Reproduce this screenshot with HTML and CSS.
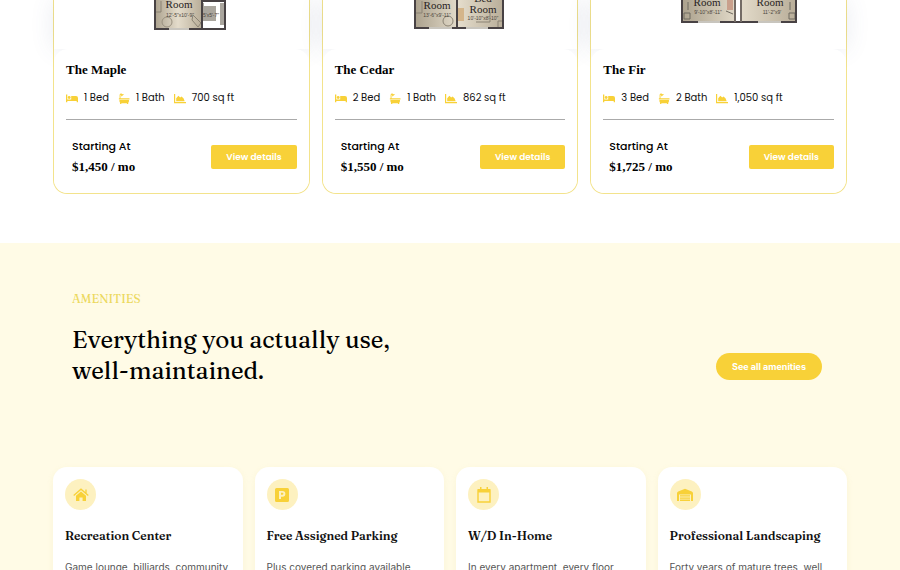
FILE: index.html
```html
<!DOCTYPE html>
<html lang="en">
<head>
  <meta charset="UTF-8">
  <title>Floor Plans &amp; Amenities</title>
  <meta name="viewport" content="width=device-width, initial-scale=1.0">
  <link rel="stylesheet" href="styles.css">
</head>
<body>
  <!-- shared icons -->
  <svg class="sprite" aria-hidden="true">
    <defs>
      <symbol id="icon-bed" viewBox="0 0 12 10">
        <path d="M0 1h1.3v5H12v2.8h-1.3V7.5H1.3v1.3H0zM5.2 2.6H10A2 2 0 0 1 12 4.600V6H5.200z"/>
        <circle cx="3.2" cy="4" r="1.4"/>
      </symbol>
      <symbol id="icon-bath" viewBox="0 0 12 12">
        <path d="M1.2 5.8V2.2A1.7 1.7 0 0 1 4.300 1.300L5.300 1l.5.7-2.500 2-.6-.6.4-.9c-.3-.6-.9-.5-.9.2v3.400H12v1.300H.4V5.800zM1 7.700h10.400v1.100a2 2 0 0 1-.8 1.700V12H9.200v-.8H3.100V12H1.700v-1.500A2 2 0 0 1 1 8.800z"/>
      </symbol>
      <symbol id="icon-area" viewBox="0 0 12 10">
        <path d="M0 .5h1.2v8H12v1.2H0zM2.2 7.7V4.8l2.2-2.6L6.2 4l1.3-1.1 2 1.8 1.2 3z"/>
      </symbol>
      <linearGradient id="floor" x1="0" y1="0" x2="1" y2="0">
        <stop offset="0" stop-color="#aaa08c"/>
        <stop offset=".5" stop-color="#e4dccb"/>
        <stop offset="1" stop-color="#b8ad98"/>
      </linearGradient>
    </defs>
  </svg>

  <section class="plans">
    <article class="plan-card">
      <div class="plan-image">
        <svg width="72" height="30" viewBox="0 0 72 30" role="img" aria-label="The Maple floor plan">
          <path fill="url(#floor)" d="M0 0h48v29H0z"/>
          <path fill="#aaa69e" d="M48 3h22v22H48z"/>
          <path fill="#fff" d="M48 21h14V6H50V3h16v24H48z"/>
          <path fill="none" stroke="#8b8374" d="M2 12h5V1M39 15l8 8-3 4-6-7z"/>
          <circle cx="13" cy="22" r="5" fill="none" stroke="#99907f"/>
          <path fill="none" stroke="#484244" stroke-width="2" d="M1 0v29h70V1H48v28"/>
          <path stroke="#c8c5be" stroke-width="2" d="M15 29h20"/>
          <text class="room" x="25" y="8">Room</text>
          <text class="size" x="26" y="17">12'-5"x10'-9"</text>
          <text class="size" x="57" y="17">5'x5'-7"</text>
        </svg>
      </div>
      <div class="plan-details">
        <h3>The Maple</h3>
        <ul class="specs">
          <li><svg class="icon"><use href="#icon-bed"/></svg>1 Bed</li>
          <li><svg class="icon"><use href="#icon-bath"/></svg>1 Bath</li>
          <li><svg class="icon"><use href="#icon-area"/></svg>700 sq ft</li>
        </ul>
        <div class="plan-footer">
          <div>
            <p class="starting">Starting At</p>
            <p class="price">$1,450 / mo</p>
          </div>
          <a href="#" class="details-btn">View details</a>
        </div>
      </div>
    </article>

    <article class="plan-card">
      <div class="plan-image">
        <svg width="90" height="30" viewBox="0 0 90 30" role="img" aria-label="The Cedar floor plan">
          <path fill="url(#floor)" d="M0 0h42v28H0zM43 0h47v28H43z"/>
          <path fill="#d4b58a" d="M44 8h6v13h-6z"/>
          <path fill="none" stroke="#8b8374" d="M2 13h6V1M62 22h14v-9M84 28v-7h5"/>
          <circle cx="34" cy="21" r="5" fill="none" stroke="#8b8374"/>
          <path fill="none" stroke="#484244" stroke-width="2" d="M1 0v28h88V0M43 0v28"/>
          <path stroke="#c8c5be" stroke-width="2" d="M15 28h23M52 28h22"/>
          <text class="room" x="23" y="9">Room</text>
          <text class="size" x="23" y="17">13'-6"x9'-11"</text>
          <text class="room" x="69" y="2">Bed</text>
          <text class="room" x="69" y="13">Room</text>
          <text class="size" x="69" y="20">10'-10"x8'-10"</text>
        </svg>
      </div>
      <div class="plan-details">
        <h3>The Cedar</h3>
        <ul class="specs">
          <li><svg class="icon"><use href="#icon-bed"/></svg>2 Bed</li>
          <li><svg class="icon"><use href="#icon-bath"/></svg>1 Bath</li>
          <li><svg class="icon"><use href="#icon-area"/></svg>862 sq ft</li>
        </ul>
        <div class="plan-footer">
          <div>
            <p class="starting">Starting At</p>
            <p class="price">$1,550 / mo</p>
          </div>
          <a href="#" class="details-btn">View details</a>
        </div>
      </div>
    </article>

    <article class="plan-card">
      <div class="plan-image plan-wide">
        <svg width="116" height="24" viewBox="0 0 116 24" role="img" aria-label="The Fir floor plan">
          <path fill="url(#floor)" d="M0 0h54v22H0zM59 0h57v22H59z"/>
          <path fill="#c9a08c" d="M46 0h6v10h-6z"/>
          <path fill="none" stroke="#6f6a60" d="M3 13h6v6H3zM108 13h6v6h-6zM7 2v8M109 2v8M45 11l7 3"/>
          <path fill="none" stroke="#484244" stroke-width="2" d="M1 0v22h114V0"/>
          <path stroke="#736b65" stroke-width="2" d="M54 0v22M60 0v22"/>
          <path stroke="#fff" stroke-width="4" d="M57 0v21"/>
          <path stroke="#c8c5be" stroke-width="2" d="M17 22h22M77 22h23"/>
          <text class="room" x="26" y="6">Room</text>
          <text class="size" x="27" y="14">9'-10"x8'-11"</text>
          <text class="room" x="89" y="6">Room</text>
          <text class="size" x="91" y="14">11'-2"x9'</text>
        </svg>
      </div>
      <div class="plan-details">
        <h3>The Fir</h3>
        <ul class="specs">
          <li><svg class="icon"><use href="#icon-bed"/></svg>3 Bed</li>
          <li><svg class="icon"><use href="#icon-bath"/></svg>2 Bath</li>
          <li><svg class="icon"><use href="#icon-area"/></svg>1,050 sq ft</li>
        </ul>
        <div class="plan-footer">
          <div>
            <p class="starting">Starting At</p>
            <p class="price">$1,725 / mo</p>
          </div>
          <a href="#" class="details-btn">View details</a>
        </div>
      </div>
    </article>
  </section>

  <section class="amenities">
    <div class="amenities-header">
      <div>
        <p class="eyebrow">AMENITIES</p>
        <h2>Everything you actually use,<br>well-maintained.</h2>
      </div>
      <a href="#" class="amenities-btn">See all amenities</a>
    </div>

    <div class="amenity-grid">
      <article class="amenity-card">
        <div class="amenity-icon">
          <svg width="16" height="14" viewBox="0 0 16 14">
            <path d="M8 3.4l5 4.3V13H9.6V9.4H6.4V13H3V7.7z"/>
            <path fill="none" stroke="currentColor" stroke-width="1.3" d="M.7 7.5L8 1.2l7.3 6.3M13 5.3V1.5"/>
          </svg>
        </div>
        <h3>Recreation Center</h3>
        <p>Game lounge, billiards, community kitchen and a fitness room.</p>
      </article>
      <article class="amenity-card">
        <div class="amenity-icon">
          <svg width="14" height="14" viewBox="0 0 14 14">
            <path fill-rule="evenodd" d="M1.5 0h11A1.5 1.5 0 0 1 14 1.5v11a1.5 1.5 0 0 1-1.5 1.5h-11A1.5 1.5 0 0 1 0 12.5v-11A1.5 1.5 0 0 1 1.5 0zM4 3v8h2V8.7h1.5a2.85 2.85 0 0 0 0-5.7zM6 4.8h1.4a1 1 0 0 1 0 2H6z"/>
          </svg>
        </div>
        <h3>Free Assigned Parking</h3>
        <p>Plus covered parking available, close to every door.</p>
      </article>
      <article class="amenity-card">
        <div class="amenity-icon">
          <svg width="14" height="16" viewBox="0 0 14 16">
            <path fill="none" stroke="currentColor" stroke-width="1.4" d="M1 3h12v12H1z"/>
            <path d="M1 2h12v3.5H1zM3 0h1.5v3H3zM9.5 0H11v3H9.5z"/>
          </svg>
        </div>
        <h3>W/D In-Home</h3>
        <p>In every apartment, every floor plan.</p>
      </article>
      <article class="amenity-card">
        <div class="amenity-icon">
          <svg width="16" height="14" viewBox="0 0 16 14">
            <path d="M0 13V5.2Q0 4 1.2 3.5L8 .7l6.8 2.8Q16 4 16 5.2V13h-2V6.5H2V13z"/>
            <path d="M3 7.3h10v1.3H3zM3 9.4h10v1.3H3zM3 11.5h10V13H3z"/>
          </svg>
        </div>
        <h3>Professional Landscaping</h3>
        <p>Forty years of mature trees, well kept all year round.</p>
      </article>
    </div>
  </section>
</body>
</html>
```
FILE: styles.css
```css
:root {
  --yellow: #f8d138;
  --cream: #fffbe6;
  --serif: Fraunces, "Liberation Serif", serif;
  --sans: Poppins, Lato, sans-serif;
}

* {
  box-sizing: border-box;
}

body {
  margin: 0;
  background: #fff;
  color: #111;
  font-family: var(--sans);
}

h2, h3, p, ul {
  margin: 0;
  padding: 0;
}

a {
  color: #fff;
  text-decoration: none;
}

.sprite {
  display: block;
  width: 0;
  height: 0;
}

/* Floor plans */
.plans {
  display: grid;
  grid-template-columns: repeat(3, 1fr);
  gap: 12px;
  padding: 0 53px 49px;
}

.plan-card {
  border: 1px solid #f3e38c;
  border-top: 0;
  border-radius: 0 0 14px 14px;
}

.plan-image {
  display: flex;
  justify-content: center;
  align-items: flex-start;
  height: 49px;
  padding-left: 18px;
  background: #fff;
  box-shadow: 0 0 24px rgba(70, 90, 130, 0.12);
}

.plan-wide {
  padding-left: 40px;
}

.room {
  font: 11px "Liberation Serif", serif;
  text-anchor: middle;
  fill: #28231e;
}

.size {
  font: 5px "Liberation Sans", sans-serif;
  text-anchor: middle;
  fill: #4c453c;
}

.plan-details {
  padding: 13px 12px 15px;
  background: #fff;
  border-radius: 14px;
}

.plan-details h3 {
  font: bold 13px/16px "Liberation Serif", serif;
  color: #000;
}

.specs {
  display: flex;
  gap: 9px;
  padding: 12px 0 13px;
  border-bottom: 1px solid #aaa;
  list-style: none;
  font-size: 10px;
  line-height: 16px;
}

.specs li {
  display: flex;
  align-items: center;
  gap: 6px;
}

.icon {
  width: 12px;
  height: 11px;
  fill: var(--yellow);
}

.plan-footer {
  display: flex;
  justify-content: space-between;
  align-items: center;
  padding: 16px 0 0 6px;
}

.starting {
  font-size: 11px;
  font-weight: 500;
  line-height: 20px;
  color: #000;
}

.price {
  font: bold 13px/22px "Liberation Serif", serif;
  color: #000;
}

.details-btn {
  padding: 0 15px;
  background: var(--yellow);
  border-radius: 2px;
  font-size: 9px;
  font-weight: 600;
  line-height: 24px;
}

/* Amenities */
.amenities {
  padding: 48px 53px 49px;
  background: var(--cream);
}

.amenities-header {
  display: flex;
  justify-content: space-between;
  align-items: flex-end;
  padding: 0 25px 81px 19px;
}

.eyebrow {
  font-family: var(--serif);
  font-size: 12px;
  line-height: 16px;
  color: #ecd95f;
}

h2 {
  margin-top: 17px;
  font-family: var(--serif);
  font-size: 24px;
  font-weight: 500;
  line-height: 31px;
  color: #000;
}

.amenities-btn {
  padding: 0 16px;
  margin-bottom: 6px;
  background: var(--yellow);
  border-radius: 14px;
  font-family: Inter, sans-serif;
  font-size: 9px;
  font-weight: 700;
  line-height: 27px;
}

.amenity-grid {
  display: grid;
  grid-template-columns: repeat(4, 1fr);
  gap: 12px;
}

.amenity-card {
  padding: 12px;
  background: #fff;
  border-radius: 14px;
  box-shadow: 0 2px 6px rgba(220, 200, 110, 0.12);
}

.amenity-icon {
  display: flex;
  align-items: center;
  justify-content: center;
  width: 31px;
  height: 31px;
  border-radius: 50%;
  background: #fdf1c0;
  color: var(--yellow);
}

.amenity-icon svg {
  fill: currentColor;
}

.amenity-card h3 {
  margin-top: 17px;
  font-family: var(--serif);
  font-size: 12px;
  font-weight: 600;
  line-height: 18px;
}

.amenity-card p {
  margin-top: 14px;
  font-family: Inter, sans-serif;
  font-size: 10px;
  line-height: 16px;
  color: #555;
}
```
